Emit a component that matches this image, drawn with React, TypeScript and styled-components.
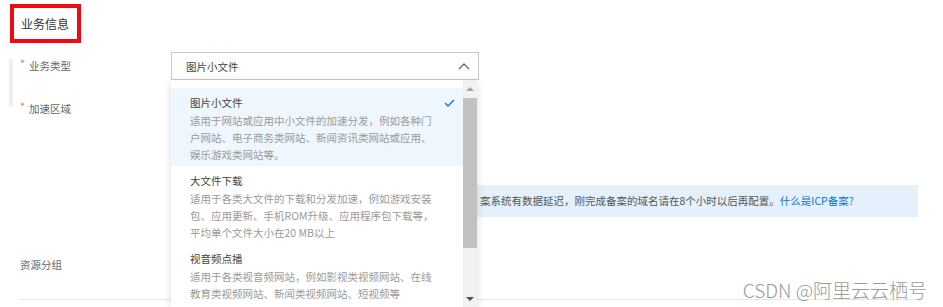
import React from 'react';
import styled, { createGlobalStyle } from 'styled-components';

const GlobalStyle = createGlobalStyle`
  html, body {
    margin: 0;
    padding: 0;
    height: 307px;
    overflow: hidden;
    background: #fff;
  }
  body {
    font-family: "Noto Sans CJK SC", "Noto Sans", sans-serif;
    -webkit-font-smoothing: antialiased;
  }
`;

const Page = styled.div`
  position: relative;
  width: 943px;
  height: 307px;
  overflow: hidden;
  box-sizing: border-box;
  padding: 4px 0 0 10px;
`;

const SectionTitle = styled.div`
  display: inline-block;
  box-sizing: border-box;
  height: 39px;
  padding: 0 8px 0 7px;
  border: 4px solid #ee0a10;
  font-size: 12px;
  line-height: 31px;
  color: #333;
`;

const Body = styled.div`
  display: flex;
  margin-left: -1px;
`;

const Rail = styled.div`
  flex: none;
  width: 4px;
  height: 48px;
  margin: 16px 7px 0 0;
  background: #efefef;
`;

const Form = styled.div`
  flex: none;
  width: 897px;
`;

const Row = styled.div<{ $gap: number; $divided?: boolean }>`
  display: grid;
  grid-template-columns: 151px 1fr;
  align-items: start;
  margin-top: ${(p) => p.$gap}px;
  ${(p) => (p.$divided ? 'padding-bottom: 20px; border-bottom: 1px solid #e6e6e6;' : '')}
`;

const Label = styled.div`
  font-size: 10.5px;
  line-height: 28px;
  color: #666;
  white-space: nowrap;
`;

const Required = styled.span`
  color: #f26b6b;
  margin-right: 4px;
  position: relative;
  top: -2px;
`;

const SelectWrap = styled.div`
  position: relative;
  width: 308px;
`;

const SelectBox = styled.div`
  display: flex;
  align-items: center;
  justify-content: space-between;
  box-sizing: border-box;
  height: 28px;
  padding: 0 8px 0 14px;
  border: 1px solid #c9c9c9;
  font-size: 10.5px;
  color: #444;
`;

const Dropdown = styled.div`
  position: absolute;
  top: 100%;
  left: 0;
  width: 306px;
  height: 227px;
  display: flex;
  background: #fff;
  box-shadow: 0 2px 8px rgba(0, 0, 0, 0.14);
  z-index: 2;
`;

const List = styled.div`
  flex: 1;
  padding-top: 8px;
  overflow: hidden;
`;

const Option = styled.div<{ $active?: boolean }>`
  display: flex;
  align-items: flex-start;
  padding: 6px 8px 3px 19px;
  background: ${(p) => (p.$active ? '#eef6fe' : 'transparent')};
`;

const OptionText = styled.div`
  width: 245px;
`;

const OptionTitle = styled.div`
  font-size: 10.5px;
  font-weight: 400;
  line-height: 18px;
  color: #444;
`;

const OptionDesc = styled.div`
  font-size: 10.5px;
  line-height: 17px;
  color: #9a9a9a;
  white-space: nowrap;
`;

const Check = styled.svg`
  flex: none;
  margin: 5px 0 0 9px;
`;

const Scrollbar = styled.div`
  flex: none;
  width: 14px;
  display: flex;
  flex-direction: column;
  align-items: center;
  background: #f1f1f1;
`;

const ScrollArrow = styled.div<{ $down?: boolean; $dim?: boolean }>`
  flex: none;
  height: 17px;
  width: 100%;
  display: flex;
  align-items: center;
  justify-content: center;
  &::before {
    content: '';
    width: 0;
    height: 0;
    border-left: 4px solid transparent;
    border-right: 4px solid transparent;
    ${(p) =>
      p.$down
        ? `border-top: 4px solid ${p.$dim ? '#a3a3a3' : '#505050'};`
        : `border-bottom: 4px solid ${p.$dim ? '#a3a3a3' : '#505050'};`}
  }
`;

const Thumb = styled.div`
  flex: none;
  width: 14px;
  height: 150px;
  margin-top: 1px;
  background: #c1c1c1;
`;

const Spacer = styled.div`
  flex: 1;
`;

const Notice = styled.div`
  box-sizing: border-box;
  width: 747px;
  height: 32px;
  margin-top: 90px;
  padding-left: 309px;
  background: #e4f1fd;
  font-size: 10.5px;
  line-height: 32px;
  color: #555;
  white-space: nowrap;
`;

const Link = styled.a`
  color: #0a73d9;
  text-decoration: none;
`;

const Watermark = styled.div`
  position: absolute;
  top: 279px;
  right: 16px;
  font-size: 19px;
  line-height: 22px;
  font-weight: 300;
  color: #9a9a9a;
  white-space: nowrap;
`;

const options = [
  {
    title: '图片小文件',
    lines: [
      '适用于网站或应用中小文件的加速分发，例如各种门',
      '户网站、电子商务类网站、新闻资讯类网站或应用、',
      '娱乐游戏类网站等。',
    ],
    active: true,
  },
  {
    title: '大文件下载',
    lines: [
      '适用于各类大文件的下载和分发加速，例如游戏安装',
      '包、应用更新、手机ROM升级、应用程序包下载等，',
      '平均单个文件大小在20 MB以上',
    ],
  },
  {
    title: '视音频点播',
    lines: [
      '适用于各类视音频网站，例如影视类视频网站、在线',
      '教育类视频网站、新闻类视频网站、短视频等',
    ],
  },
];

const App: React.FC = () => {
  return (
    <Page>
      <GlobalStyle />
      <SectionTitle>业务信息</SectionTitle>
      <Body>
        <Rail />
        <Form>
          <Row $gap={9}>
            <Label>
              <Required>*</Required>业务类型
            </Label>
            <SelectWrap>
              <SelectBox>
                <span>图片小文件</span>
                <svg width="12" height="8" viewBox="0 0 12 8">
                  <polyline points="1,7 6,2 11,7" fill="none" stroke="#666" strokeWidth="1.3" />
                </svg>
              </SelectBox>
              <Dropdown>
                <List>
                  {options.map((o) => (
                    <Option key={o.title} $active={o.active}>
                      <OptionText>
                        <OptionTitle>{o.title}</OptionTitle>
                        {o.lines.map((l) => (
                          <OptionDesc key={l}>{l}</OptionDesc>
                        ))}
                      </OptionText>
                      {o.active && (
                        <Check width="11" height="8" viewBox="0 0 11 8">
                          <polyline points="1,4 4,7 10,1" fill="none" stroke="#2b7fdc" strokeWidth="1.6" />
                        </Check>
                      )}
                    </Option>
                  ))}
                </List>
                <Scrollbar>
                  <ScrollArrow $dim />
                  <Thumb />
                  <Spacer />
                  <ScrollArrow $down />
                </Scrollbar>
              </Dropdown>
            </SelectWrap>
          </Row>
          <Row $gap={15}>
            <Label>
              <Required>*</Required>加速区域
            </Label>
            <Notice>
              案系统有数据延迟，刚完成备案的域名请在8个小时以后再配置。<Link href="#">什么是ICP备案?</Link>
            </Notice>
          </Row>
          <Row $gap={34} $divided>
            <Label>资源分组</Label>
            <div />
          </Row>
        </Form>
      </Body>
      <Watermark>CSDN @阿里云云栖号</Watermark>
    </Page>
  );
};

export default App;
